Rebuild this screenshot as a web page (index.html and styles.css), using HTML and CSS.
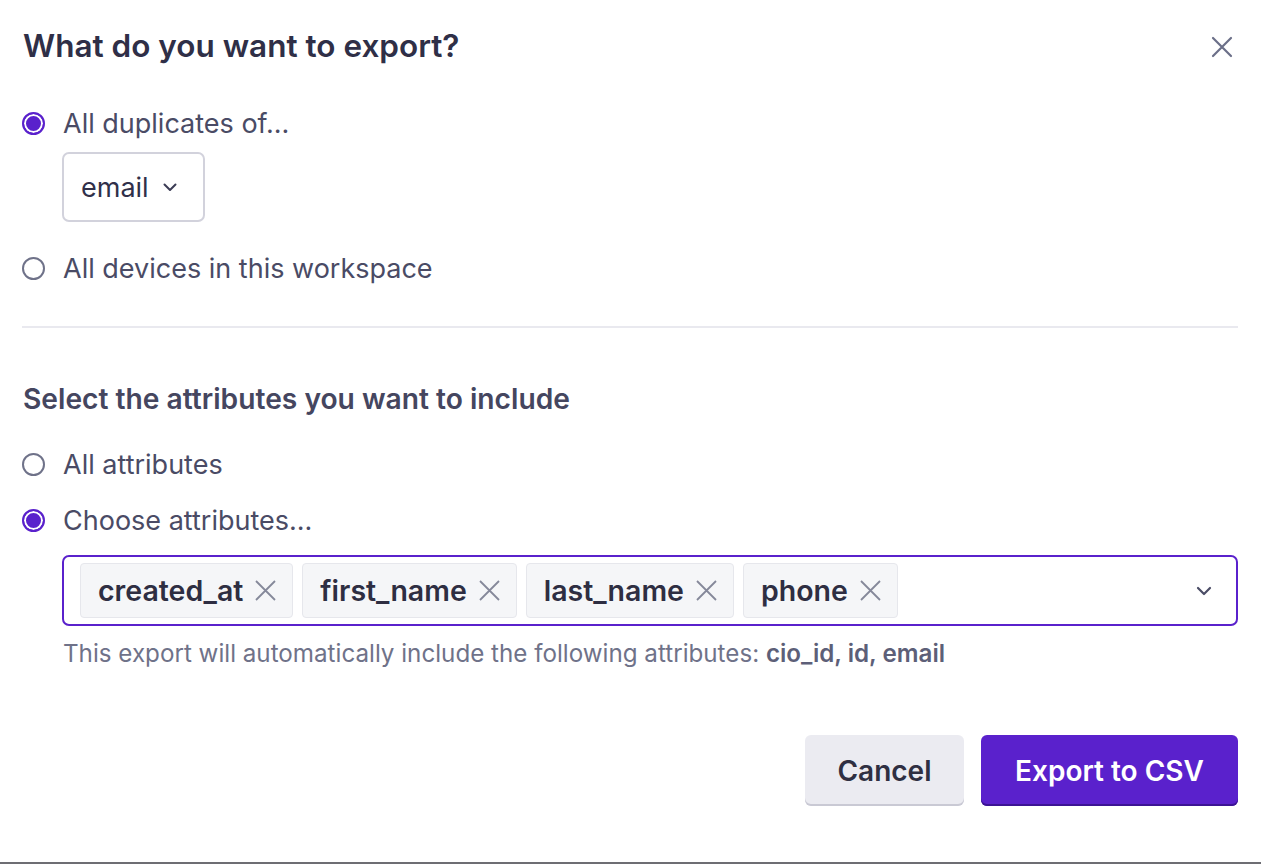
FILE: index.html
```html
<!DOCTYPE html>
<html lang="en">
<head>
    <meta charset="UTF-8">
    <meta name="viewport" content="width=device-width, initial-scale=1.0">
    <title>Export</title>
    <link rel="stylesheet" href="styles.css">
</head>
<body>
    <div class="modal">
        <div class="modal-header">
            <h2 class="title">What do you want to export?</h2>
            <button class="close" aria-label="Close">
                <svg width="22" height="22" viewBox="0 0 22 22"><path d="M2 2L20 20M20 2L2 20" stroke="#6b6f88" stroke-width="2.2" stroke-linecap="round"/></svg>
            </button>
        </div>

        <label class="option first"><input type="radio" name="what" checked> All duplicates of...</label>
        <div class="select">
            <span>email</span>
            <svg width="14" height="9" viewBox="0 0 14 9"><path d="M1.5 1.5L7 7L12.5 1.5" fill="none" stroke="#3b3c55" stroke-width="2" stroke-linecap="round" stroke-linejoin="round"/></svg>
        </div>
        <label class="option devices"><input type="radio" name="what"> All devices in this workspace</label>

        <hr class="divider">

        <h3 class="subtitle">Select the attributes you want to include</h3>
        <label class="option all-attrs"><input type="radio" name="attrs"> All attributes</label>
        <label class="option choose"><input type="radio" name="attrs" checked> Choose attributes...</label>

        <div class="multi">
            <div class="tags">
                <span class="tag">created_at <svg class="x" width="21" height="21" viewBox="0 0 21 21"><path d="M1 1L20 20M20 1L1 20" stroke="#85889a" stroke-width="1.8"/></svg></span>
                <span class="tag">first_name <svg class="x" width="21" height="21" viewBox="0 0 21 21"><path d="M1 1L20 20M20 1L1 20" stroke="#85889a" stroke-width="1.8"/></svg></span>
                <span class="tag">last_name <svg class="x" width="21" height="21" viewBox="0 0 21 21"><path d="M1 1L20 20M20 1L1 20" stroke="#85889a" stroke-width="1.8"/></svg></span>
                <span class="tag">phone <svg class="x" width="21" height="21" viewBox="0 0 21 21"><path d="M1 1L20 20M20 1L1 20" stroke="#85889a" stroke-width="1.8"/></svg></span>
            </div>
            <svg class="chevron" width="16" height="10" viewBox="0 0 16 10"><path d="M2 2L8 8L14 2" fill="none" stroke="#4b4d66" stroke-width="2.2" stroke-linecap="round" stroke-linejoin="round"/></svg>
        </div>
        <p class="hint">This export will automatically include the following attributes: <b>cio_id, id, email</b></p>

        <div class="actions">
            <button class="btn cancel">Cancel</button>
            <button class="btn primary">Export to CSV</button>
        </div>
    </div>
</body>
</html>
```

FILE: styles.css
```css
* {
    margin: 0;
    padding: 0;
    box-sizing: border-box;
    font-family: Inter, "Noto Sans", sans-serif;
}

body {
    background: #fff;
    height: 100vh;
    border-bottom: 2px solid #6d6d73;
}

.modal {
    padding: 0 23px 0 22px;
    display: flex;
    flex-direction: column;
}

.modal-header {
    height: 90px;
    display: flex;
    justify-content: space-between;
    align-items: center;
}

.title {
    font-size: 31.5px;
    font-weight: 600;
    color: #2f2f47;
    margin-left: 1px;
}

.close {
    border: none;
    background: none;
    width: 22px;
    height: 22px;
    margin-top: 4px;
    margin-right: 5px;
    cursor: pointer;
}

.option {
    display: flex;
    align-items: center;
    gap: 18px;
    height: 36px;
    font-size: 27px;
    color: #4a4b65;
    cursor: pointer;
}

.option input {
    appearance: none;
    width: 23px;
    height: 23px;
    border: 2px solid #6f7289;
    border-radius: 50%;
    flex-shrink: 0;
    margin-left: 0;
}

.option input:checked {
    border: 2px solid #5a21cc;
    background: #5a21cc;
    box-shadow: inset 0 0 0 2px #fff;
}

.option.first { margin-top: 15px; }

.select {
    margin: 11px 0 0 40px;
    width: 143px;
    height: 70px;
    border: 2px solid #d2d2dc;
    border-radius: 7px;
    display: flex;
    align-items: center;
    justify-content: space-between;
    padding: 0 26px 0 17px;
    font-size: 27px;
    color: #30304a;
}

.option.devices { margin-top: 28px; }

.divider {
    border: none;
    height: 2px;
    background: #e9e9ef;
    margin-top: 40px;
}

.subtitle {
    margin-top: 55px;
    font-size: 28.2px;
    line-height: 32px;
    font-weight: 600;
    color: #45465f;
    margin-left: 1px;
}

.option.all-attrs { margin-top: 31px; }
.option.choose { margin-top: 20px; }

.multi {
    margin: 17px 0 0 40px;
    height: 71px;
    border: 2px solid #5a21cc;
    border-radius: 7px;
    display: flex;
    align-items: center;
    justify-content: space-between;
    padding: 0 24px 0 16px;
}

.tags {
    display: flex;
    gap: 9px;
}

.tag {
    display: flex;
    align-items: center;
    gap: 12px;
    height: 55px;
    padding: 0 16px 0 17px;
    background: #f5f6f8;
    border: 1px solid #e6e7ec;
    border-radius: 4px;
    font-size: 28.5px;
    font-weight: 600;
    color: #2e2e42;
}

.hint {
    margin: 14px 0 0 41px;
    font-size: 24.2px;
    line-height: 28px;
    color: #6f7289;
}

.hint b {
    font-weight: 600;
    color: #5d5f78;
}

.actions {
    margin-top: 67px;
    display: flex;
    justify-content: flex-end;
    gap: 17px;
}

.btn {
    height: 71px;
    border: none;
    border-radius: 6px;
    font-size: 28px;
    font-weight: 600;
    cursor: pointer;
}

.cancel {
    width: 159px;
    background: #ebebf1;
    color: #2f2f42;
    box-shadow: inset 0 -2px 0 #c9c9d4;
}

.primary {
    width: 257px;
    background: #5a21cc;
    color: #fff;
    box-shadow: inset 0 -2px 0 #3c1494;
}
```
